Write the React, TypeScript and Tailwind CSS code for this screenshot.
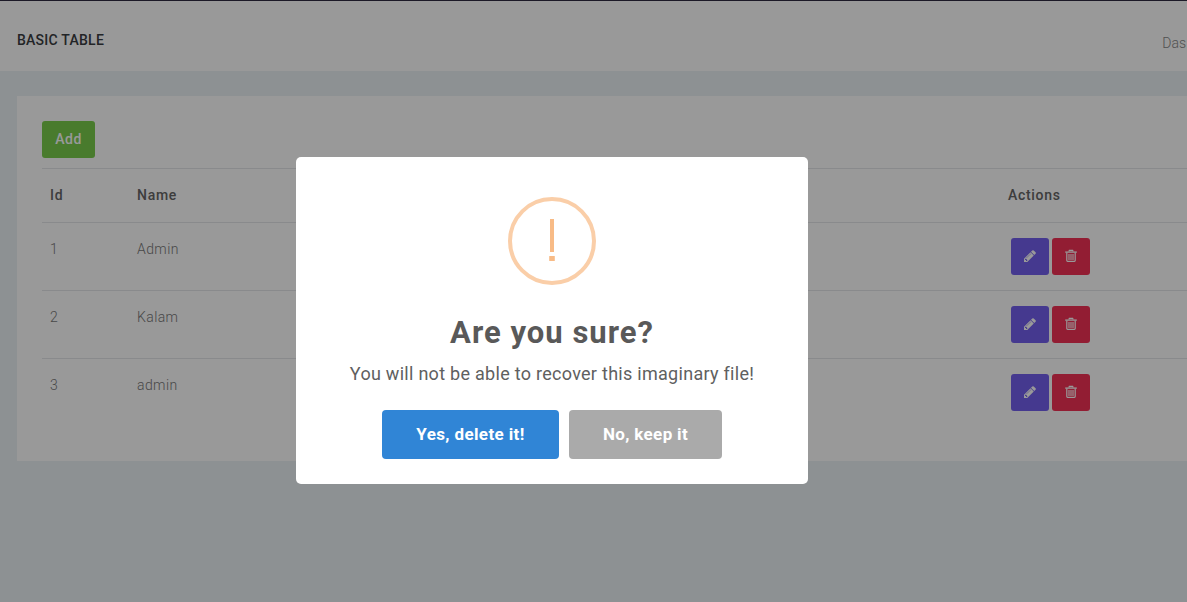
import React from "react";

const rows = [
  { id: 1, name: "Admin" },
  { id: 2, name: "Kalam" },
  { id: 3, name: "admin" },
];

function PencilIcon() {
  return (
    <svg viewBox="0 0 1792 1792" className="mb-0.5 size-3.5" fill="currentColor" aria-hidden="true">
      <path d="M491 1536l91-91-235-235-91 91v107h128v128h107zM1014 608q0-22-22-22-10 0-17 7l-542 542q-7 7-7 17 0 22 22 22 10 0 17-7l542-542q7-7 7-17zM960 416l416 416-832 832h-416v-416zM1643 512q0 53-37 90l-166 166-416-416 166-165q36-38 90-38 53 0 91 38l235 234q37 39 37 91z" />
    </svg>
  );
}

function TrashIcon() {
  return (
    <svg viewBox="0 0 14 14" className="mb-0.5 size-3.5" fill="none" stroke="currentColor" aria-hidden="true">
      <path d="M4.8 2.5L5.3 1.4H8.7L9.2 2.5" strokeWidth="1.1" />
      <path d="M1.2 3.1H12.8" strokeWidth="1.3" />
      <path d="M2.8 3.5V11.6Q2.8 12.4 3.6 12.4H10.4Q11.2 12.4 11.2 11.6V3.5" strokeWidth="1.2" />
      <path d="M5 5V11M7 5V11M9 5V11" strokeWidth="1.1" />
    </svg>
  );
}

function Page() {
  return (
    <div className="h-full w-full bg-[#ebf2f5]">
      <header className="flex h-[71px] justify-between border-t border-[#2f2a42] bg-white pl-[17px]">
        <h4 className="mt-[29px] text-sm leading-5 font-medium tracking-[0.25px] text-[#3a3d42]">BASIC TABLE</h4>
        <span className="mt-8 pr-px text-sm leading-5 font-light whitespace-nowrap text-[#888]">Das</span>
      </header>
      <main className="pt-[25px] pl-[17px]">
        <section className="h-[365px] bg-white pt-[25px] pl-[25px]">
          <button className="flex h-[37px] w-[53px] items-center justify-center rounded-[3px] bg-[#7ace4c] pb-0.5 text-sm font-medium tracking-[0.5px] text-white">
            Add
          </button>
          <div className="mt-2.5">
            <div className="grid h-[54px] grid-cols-[87px_871px_1fr] border-t border-[#e4e7ea] pt-4 pl-2 text-sm leading-5 font-medium tracking-[0.7px] text-[#666]">
              <span>Id</span>
              <span>Name</span>
              <span>Actions</span>
            </div>
            {rows.map((row) => (
              <div
                key={row.id}
                className="grid h-[68px] grid-cols-[87px_871px_1fr] border-t border-[#e4e7ea] pt-4 pl-2 text-sm leading-5 font-light tracking-[0.4px] text-[#797979]"
              >
                <span>{row.id}</span>
                <span>{row.name}</span>
                <div className="-mt-px flex gap-[3px] pl-[3px] text-white">
                  <button aria-label="Edit" className="flex h-[37px] w-[38px] items-center justify-center rounded-[3px] bg-[#7460ee]">
                    <PencilIcon />
                  </button>
                  <button aria-label="Delete" className="flex h-[37px] w-[38px] items-center justify-center rounded-[3px] bg-[#f33155]">
                    <TrashIcon />
                  </button>
                </div>
              </div>
            ))}
          </div>
        </section>
      </main>
    </div>
  );
}

function ConfirmDialog() {
  return (
    <div role="dialog" className="flex h-[327px] w-[512px] flex-col items-center rounded-[5px] bg-white pt-10">
      <div className="flex size-[88px] items-center justify-center rounded-full border-4 border-[#facea8]">
        <svg viewBox="0 0 6 42" className="mb-0.5 h-[42px] w-1.5" fill="#f8bb86" aria-hidden="true">
          <rect x="1" y="0" width="4" height="33" />
          <rect x="0.2" y="37" width="5.6" height="5" rx="0.5" />
        </svg>
      </div>
      <h2 className="mt-7 text-[31px] leading-10 font-bold tracking-[1px] whitespace-nowrap text-[#595959]">Are you sure?</h2>
      <p className="mt-[9px] text-lg leading-6 tracking-[0.28px] whitespace-nowrap text-[#606060]">
        You will not be able to recover this imaginary file!
      </p>
      <div className="mt-6 flex gap-2.5">
        <button className="h-[49px] w-[177px] rounded-[4px] bg-[#3085d6] text-[17px] font-bold tracking-[0.38px] whitespace-nowrap text-white">
          Yes, delete it!
        </button>
        <button className="h-[49px] w-[153px] rounded-[4px] bg-[#aaaaaa] text-[17px] font-bold tracking-[0.35px] whitespace-nowrap text-white">
          No, keep it
        </button>
      </div>
    </div>
  );
}

export default function App() {
  return (
    <div className="relative h-[602px] w-full overflow-hidden font-[Roboto,'Liberation_Sans',sans-serif]">
      <Page />
      <div className="absolute inset-0 bg-black/40 pt-[157px] pl-[296px]">
        <ConfirmDialog />
      </div>
    </div>
  );
}
